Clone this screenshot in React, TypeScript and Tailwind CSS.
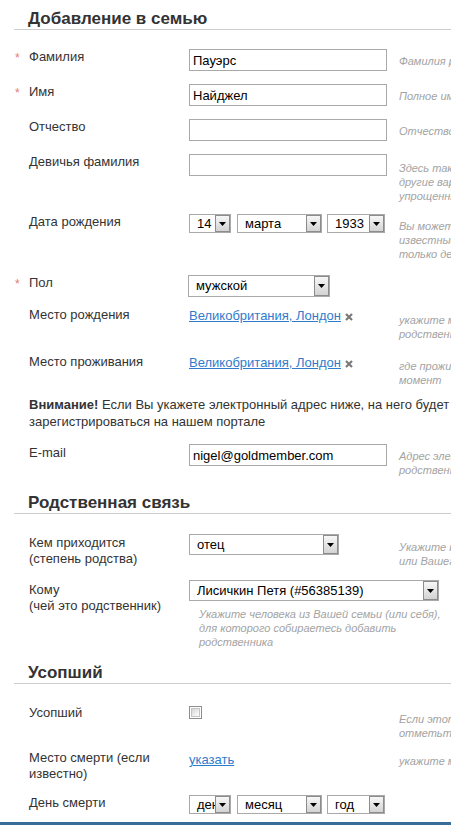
import React from 'react';

type RowProps = {
  label: React.ReactNode;
  required?: boolean;
  h: string;
  labelCls?: string;
  hintCls?: string;
  hint?: React.ReactNode;
  children?: React.ReactNode;
};

const Row: React.FC<RowProps> = ({ label, required, h, labelCls = '', hintCls = 'pt-[5px]', hint, children }) => (
  <div className={`grid grid-cols-[15px_160px_210px_1fr] ${h}`}>
    <div className="pl-[1px] pt-[1px] text-[12px] leading-[16px] text-[#e57a7a]">{required ? '*' : ''}</div>
    <div className={`leading-[16px] text-[#333] ${labelCls}`}>{label}</div>
    <div>{children}</div>
    <div className={`whitespace-nowrap text-[11px] italic leading-[14px] text-[#a3a3a3] ${hintCls}`}>{hint}</div>
  </div>
);

const Heading: React.FC<{ children: React.ReactNode; cls?: string }> = ({ children, cls = '' }) => (
  <h2 className={`border-b border-[#cdcdcd] pl-[14px] text-[17px] font-bold leading-[20px] text-[#333] ${cls}`}>{children}</h2>
);

const TextInput: React.FC<{ value?: string }> = ({ value = '' }) => (
  <input
    readOnly
    value={value}
    className="block h-[22px] w-[198px] border border-[#a9a9a9] bg-white px-[3px] text-[13px] leading-[20px] text-black outline-none"
  />
);

const Arrow: React.FC = () => (
  <div className="absolute inset-y-0 right-0 flex w-[15px] items-center justify-center border border-[#8c8c8c] bg-linear-to-b from-[#f7f7f7] to-[#d3d3d3]">
    <svg width="7" height="4" viewBox="0 0 7 4">
      <path d="M0 0h7L3.5 4z" fill="#000" />
    </svg>
  </div>
);

const Select: React.FC<{ text: string; cls: string }> = ({ text, cls }) => (
  <div className={`relative flex items-center overflow-hidden whitespace-nowrap border border-[#a9a9a9] bg-white pl-[7px] text-[13px] text-black ${cls}`}>
    {text}
    <Arrow />
  </div>
);

const DateSelects: React.FC<{ d: string; m: string; y: string }> = ({ d, m, y }) => (
  <div className="flex">
    <Select text={d} cls="h-[19px] w-[42px]" />
    <Select text={m} cls="ml-[6px] h-[19px] w-[85px]" />
    <Select text={y} cls="ml-[5px] h-[19px] w-[58px]" />
  </div>
);

const Place: React.FC = () => (
  <div className="flex h-[16px] items-center pt-[2px]">
    <a href="#" className="leading-[16px] text-[#2f7bcc] underline">Великобритания, Лондон</a>
    <svg width="8" height="8" viewBox="0 0 8 8" className="ml-[4px] mt-[2px]">
      <path d="M1 1L7 7M7 1L1 7" stroke="#7a7a7a" strokeWidth="2.2" />
    </svg>
  </div>
);

const Checkbox: React.FC = () => (
  <div className="mt-[1px] h-[13px] w-[13px] border border-[#8e8e8e] bg-white p-[1px]">
    <div className="h-full w-full border border-[#c4c4c4] bg-linear-to-br from-[#d6d6d6] to-white" />
  </div>
);

export default function App() {
  return (
    <div className="min-h-[827px] w-[451px] overflow-hidden bg-white font-['Liberation_Sans',Arial,sans-serif] text-[13px] text-[#333]">
      <div className="w-[760px] pl-[14px]">
        <Heading cls="pt-[9px]">Добавление в семью</Heading>

        <div className="mt-[19px]">
          <Row required label="Фамилия" h="h-[35px]" hint="Фамилия родственника">
            <TextInput value="Пауэрс" />
          </Row>
          <Row required label="Имя" h="h-[35px]" hint="Полное имя родственника">
            <TextInput value="Найджел" />
          </Row>
          <Row label="Отчество" h="h-[35px]" hint="Отчество родственника">
            <TextInput />
          </Row>
          <Row
            label="Девичья фамилия"
            h="h-[60px]"
            hintCls="pt-[7px]"
            hint={<>Здесь также можно указать<br />другие варианты фамилии или<br />упрощенные написания</>}
          >
            <TextInput />
          </Row>
          <Row
            label="Дата рождения"
            h="h-[61px]"
            hint={<>Вы можете указать только<br />известные части даты, например<br />только день и месяц</>}
          >
            <DateSelects d="14" m="марта" y="1933" />
          </Row>
          <Row required label="Пол" h="h-[32px]" hint="">
            <Select text="мужской" cls="-ml-[1px] h-[22px] w-[142px]" />
          </Row>
          <Row
            label="Место рождения"
            h="h-[47px]"
            hintCls="pt-[6px]"
            hint={<>укажите место рождения<br />родственника</>}
          >
            <Place />
          </Row>
          <Row
            label="Место проживания"
            h="h-[42px]"
            hint={<>где проживает в данный<br />момент</>}
          >
            <Place />
          </Row>

          <div className="h-[48px] whitespace-nowrap pl-[15px] leading-[17px] text-[#333]">
            <b>Внимание!</b> Если Вы укажете электронный адрес ниже, на него будет отправлено приглашение
            <br />
            зарегистрироваться на нашем портале
          </div>

          <Row
            label="E-mail"
            labelCls="pt-[1px]"
            h="h-[49px]"
            hint={<>Адрес электронной почты<br />родственника</>}
          >
            <TextInput value="nigel@goldmember.com" />
          </Row>
        </div>

        <Heading>Родственная связь</Heading>

        <div className="mt-[20px]">
          <Row
            label={<>Кем приходится<br />(степень родства)</>}
            labelCls="pt-[1px]"
            h="h-[46px]"
            hintCls="pt-[6px]"
            hint={<>Укажите кем приходится<br />или Вашего родственника</>}
          >
            <Select text="отец" cls="h-[21px] w-[150px]" />
          </Row>
          <div className="grid h-[83px] grid-cols-[15px_160px_1fr]">
            <div />
            <div className="pt-[2px] leading-[16px]">
              Кому
              <br />
              (чей это родственник)
            </div>
            <div>
              <Select text="Лисичкин Петя (#56385139)" cls="h-[21px] w-[250px]" />
              <div className="whitespace-nowrap pl-[10px] pt-[6px] text-[11px] italic leading-[14px] text-[#a3a3a3]">
                Укажите человека из Вашей семьи (или себя),
                <br />
                для которого собираетесь добавить
                <br />
                родственника
              </div>
            </div>
          </div>
        </div>

        <Heading>Усопший</Heading>

        <div className="mt-[21px]">
          <Row
            label="Усопший"
            h="h-[45px]"
            hintCls="pt-[7px]"
            hint={<>Если этот человек умер,<br />отметьте галочку</>}
          >
            <Checkbox />
          </Row>
          <Row
            label={<>Место смерти (если<br />известно)</>}
            h="h-[45px]"
            hintCls="pt-[4px]"
            hint="укажите место смерти"
          >
            <div className="pt-[2px] leading-[16px]">
              <a href="#" className="text-[#2f7bcc] underline">указать</a>
            </div>
          </Row>
          <Row label="День смерти" h="h-[27px]" hint="">
            <DateSelects d="день" m="месяц" y="год" />
          </Row>
        </div>
      </div>
      <div className="h-[3px] w-full bg-[#376d98]" />
    </div>
  );
}
